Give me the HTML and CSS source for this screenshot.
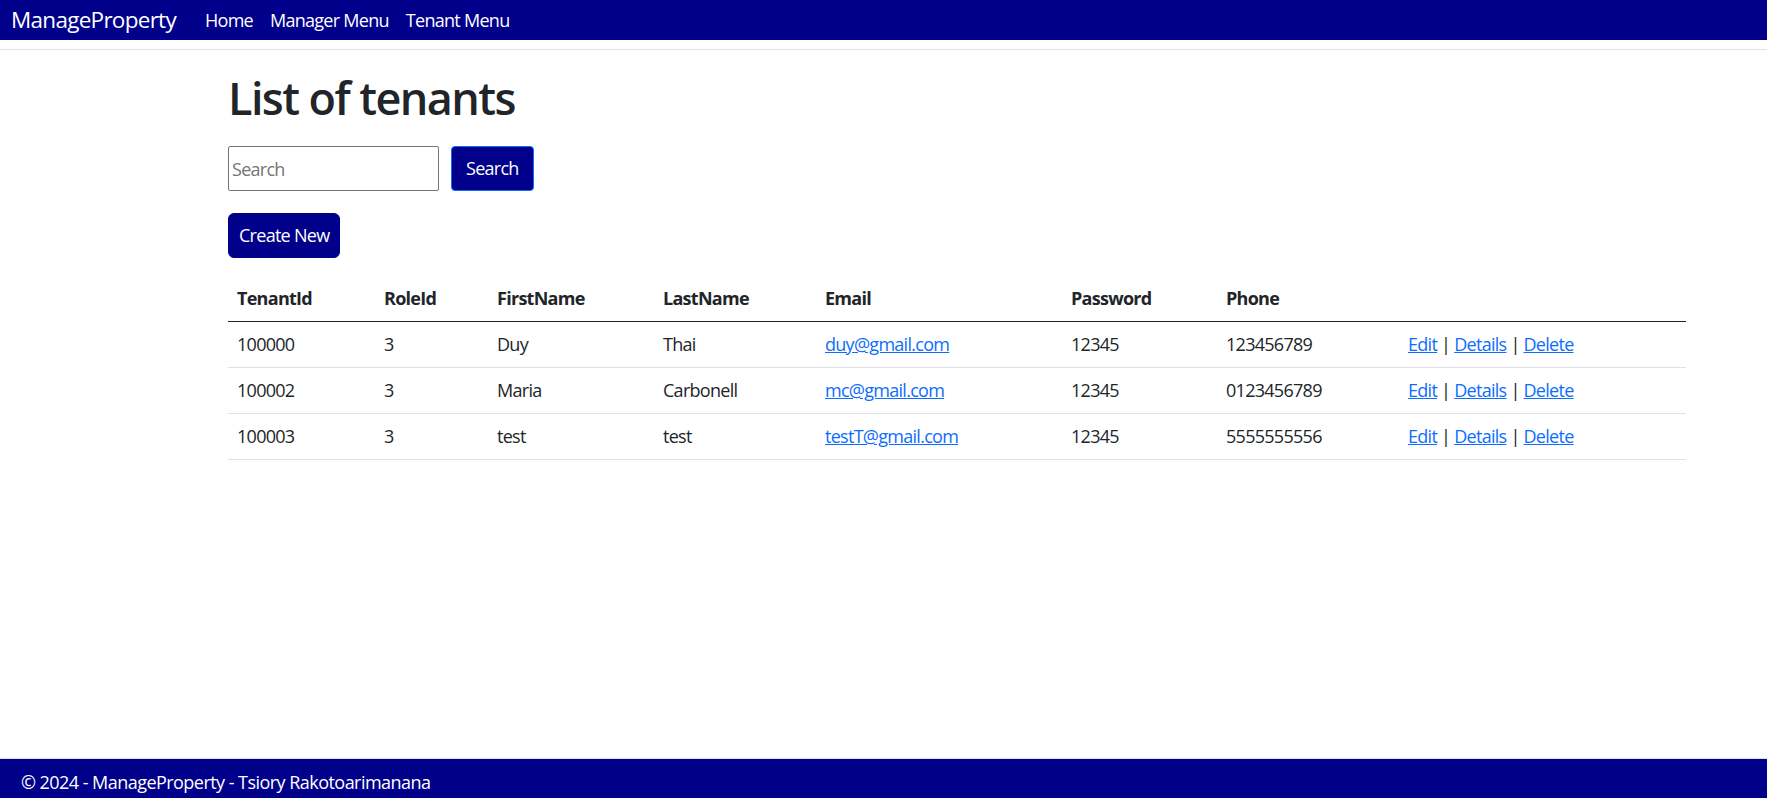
FILE: index.html
```html
<!DOCTYPE html>
<html lang="en">
<head>
<meta charset="utf-8">
<title>List of tenants - ManageProperty</title>
<link rel="stylesheet" href="styles.css">
</head>
<body>
<div class="page">
  <header class="site-header">
    <nav class="navbar">
      <a class="brand" href="#">ManageProperty</a>
      <ul class="nav-links">
        <li><a href="#">Home</a></li>
        <li><a href="#">Manager Menu</a></li>
        <li><a href="#">Tenant Menu</a></li>
      </ul>
    </nav>
  </header>

  <main class="container">
    <h1 class="title">List of tenants</h1>

    <form class="search-form">
      <input class="search-input" type="text" placeholder="Search">
      <button class="btn btn-search" type="button">Search</button>
    </form>

    <p class="actions"><a class="btn btn-create" href="#">Create New</a></p>

    <table class="table">
      <colgroup>
        <col class="c-id"><col class="c-role"><col class="c-first"><col class="c-last">
        <col class="c-email"><col class="c-pass"><col class="c-phone"><col class="c-act">
      </colgroup>
      <thead>
        <tr>
          <th>TenantId</th><th>RoleId</th><th>FirstName</th><th>LastName</th>
          <th>Email</th><th>Password</th><th>Phone</th><th></th>
        </tr>
      </thead>
      <tbody>
        <tr>
          <td>100000</td><td>3</td><td>Duy</td><td>Thai</td>
          <td><a href="#">duy@gmail.com</a></td><td>12345</td><td>123456789</td>
          <td><a href="#">Edit</a> | <a href="#">Details</a> | <a href="#">Delete</a></td>
        </tr>
        <tr>
          <td>100002</td><td>3</td><td>Maria</td><td>Carbonell</td>
          <td><a href="#">mc@gmail.com</a></td><td>12345</td><td>0123456789</td>
          <td><a href="#">Edit</a> | <a href="#">Details</a> | <a href="#">Delete</a></td>
        </tr>
        <tr>
          <td>100003</td><td>3</td><td>test</td><td>test</td>
          <td><a href="#">testT@gmail.com</a></td><td>12345</td><td>5555555556</td>
          <td><a href="#">Edit</a> | <a href="#">Details</a> | <a href="#">Delete</a></td>
        </tr>
      </tbody>
    </table>
  </main>

  <footer class="footer">
    <div class="footer-inner">&copy; 2024 - ManageProperty - Tsiory Rakotoarimanana</div>
  </footer>
</div>
</body>
</html>
```

FILE: styles.css
```css
* { box-sizing: border-box; }

html, body {
  margin: 0;
  padding: 0;
}

body {
  font-family: "Open Sans", "Noto Sans", "Liberation Sans", sans-serif;
  font-size: 18px;
  line-height: 27px;
  color: #212529;
  background: #fff;
  letter-spacing: -0.04em;
}

.page {
  display: flex;
  flex-direction: column;
  min-height: 100vh;
}

.site-header {
  padding-bottom: 9px;
  border-bottom: 1px solid #dee2e6;
}

.navbar {
  display: flex;
  align-items: center;
  height: 40px;
  padding: 0 11px;
  background: #00008b;
}

.brand {
  color: #fff;
  text-decoration: none;
  font-size: 22.5px;
  line-height: 30px;
  margin-right: 20px;
}

.nav-links {
  display: flex;
  list-style: none;
  margin: 0;
  padding: 0;
}

.nav-links a {
  display: block;
  color: #fff;
  text-decoration: none;
  padding: 0 9px;
  line-height: 27px;
}

.nav-links li + li a {
  padding-left: 8px;
}

.container {
  flex: 1;
  width: 1458px;
  margin-left: 228px;
  padding-top: 21px;
}

.title {
  margin: 0 0 21px;
  font-size: 45px;
  line-height: 54px;
  font-weight: 600;
  letter-spacing: -0.035em;
}

.search-form {
  display: flex;
  gap: 12px;
  margin: 0 0 22px;
}

.search-input {
  width: 211px;
  height: 45px;
  border: 1px solid #767676;
  border-radius: 2px;
  padding: 0 3px;
  font-family: inherit;
  font-size: 18px;
  letter-spacing: -0.04em;
  color: #212529;
}

.search-input::placeholder {
  color: #757575;
}

.btn {
  display: inline-block;
  height: 45px;
  padding: 8px 13px;
  line-height: 27px;
  font-family: inherit;
  font-size: 18px;
  letter-spacing: -0.04em;
  color: #fff;
  background: #00008b;
  text-decoration: none;
  border-radius: 6px;
}

.btn-search {
  border: 1px solid #0d6efd;
  border-radius: 4px;
  padding: 8px 14px;
  cursor: pointer;
}

.btn-create {
  border: 1px solid #00008b;
  padding: 8px 10px;
}

.actions {
  margin: 0 0 18px;
}

.table {
  width: 100%;
  border-collapse: collapse;
  table-layout: fixed;
}

.c-id { width: 147px; }
.c-role { width: 113px; }
.c-first { width: 166px; }
.c-last { width: 162px; }
.c-email { width: 246px; }
.c-pass { width: 155px; }
.c-phone { width: 182px; }
.c-act { width: 287px; }

.table th,
.table td {
  padding: 9px;
  text-align: left;
  vertical-align: top;
}

.table th {
  font-weight: 700;
  border-bottom: 1px solid #212529;
}

.table td {
  border-bottom: 1px solid #dee2e6;
}

.table a {
  color: #0d6efd;
  text-decoration: underline;
}

.footer {
  height: 40px;
  border-top: 1px solid #dee2e6;
  background: #00008b;
  color: #fff;
  overflow: hidden;
}

.footer-inner {
  padding: 10px 21px 0;
  line-height: 27px;
  letter-spacing: -0.03em;
}
```
